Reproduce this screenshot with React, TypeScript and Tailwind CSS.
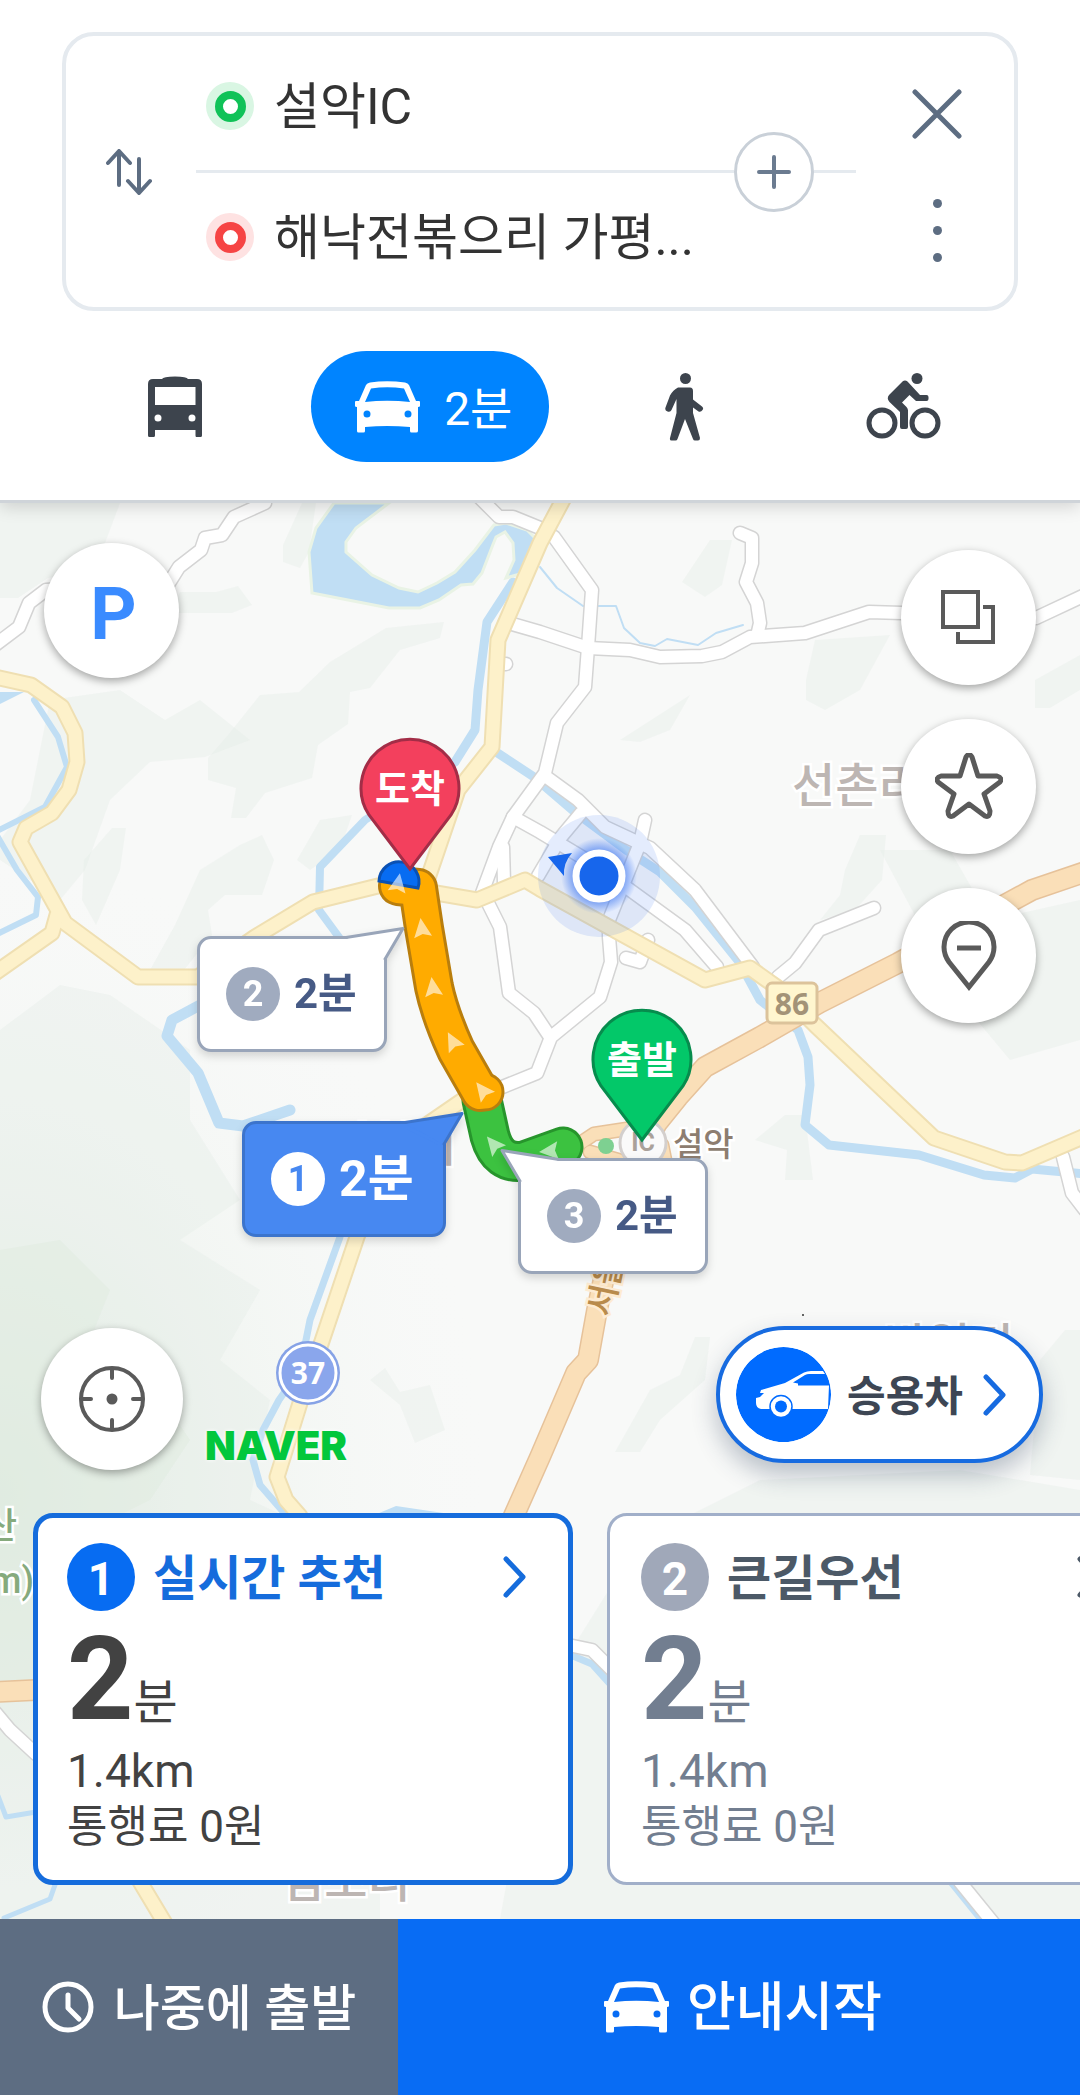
import { useState } from "react";
import type { ReactNode } from "react";

const MAP_TOP = 503;

const minorRoads = [
  "M265 503L234 517L222 535L205 538L201 550L179 567L169 583L46 590L29 603L19 627L-5 645",
  "M480 498L499 517L513 517L540 528L554 537L592 590L588 647L585 687L557 723L545 773L513 817L499 847L482 893",
  "M505 622L540 632L588 648L630 650L660 657L702 656L722 652L750 637L805 633L869 612L902 613L1036 618L1085 595",
  "M740 533L752 538L752 563L746 582L757 603L760 623L757 636",
  "M545 776L578 800L605 827L650 848L695 890L753 967",
  "M645 820L640 843L609 920L609 937L611 962L600 997L551 1037L537 1073L490 1092",
  "M513 817L540 832L600 868L630 890L685 930L717 967",
  "M581 813L561 837L538 876",
  "M503 847L504 883",
  "M486 899L500 927L509 993L534 1013L550 1037",
  "M778 977L795 963L819 930L874 908",
  "M1063 1157L1072 1193L1085 1210",
  "M648 940L640 962L626 958",
  "M500 664L506 664",
  "M573 1646L592 1650L612 1670",
  "M960 1882L995 1925",
  "M-5 1712L10 1730L36 1754",
];

const yellowRoads = [
  "M564 498L540 543L498 640L492 747L458 790L424 890",
  "M-5 677L31 685L62 707L75 733L77 762L69 790L52 813L26 828L20 842L65 923L138 977L198 977L255 937L313 902L382 885L436 893L477 900L525 880L540 889L705 980L750 968L778 988L815 1025L934 1138L1005 1162L1022 1163L1085 1136",
  "M-5 973L52 933L57 915",
  "M470 1095L390 1150L357 1237L320 1347L300 1403L277 1477L286 1500L300 1516",
  "M136 1875L166 1925",
];

const orangeRoads = [
  "M1085 872L1032 890L898 963L819 1003L760 1037L705 1067L678 1097L657 1123L625 1180L597 1310L588 1360L576 1373L540 1457L512 1520",
  "M-5 1692L36 1690",
];

const streams = [
  { d: "M513 582L487 622L478 690L475 730L455 762", width: 9 },
  { d: "M455 762L365 820L320 867L319 910L341 940", width: 8 },
  { d: "M490 748L534 777L576 813L626 850L660 872L695 907L740 963L760 1000L798 1030L808 1057L810 1085L805 1125L829 1145L919 1155L984 1175L1015 1178L1032 1169L1085 1174", width: 9 },
  { d: "M540 567L557 588L583 606L616 606L624 628L640 643L655 646L667 639L698 645L716 633L743 625", width: 2 },
  { d: "M34 700L58 737L67 767L45 807L-5 832L17 870L38 897L36 915L-5 935", width: 6 },
  { d: "M200 1005L172 1020L167 1036L198 1073L219 1123L243 1126L290 1110", width: 11 },
  { d: "M340 1237L310 1320L300 1370L279 1400L263 1430L253 1460L260 1485L286 1515", width: 7 },
  { d: "M573 1656L592 1664L610 1684", width: 7 },
  { d: "M948 1880L982 1922", width: 5 },
  { d: "M-2 1796L6 1817L36 1812M56 1882L50 1899L4 1918", width: 5 },
];

const hills = [
  "M0 503H120L95 570L48 578L18 598H0Z",
  "M180 592H216L238 586L252 605L232 613H170Z",
  "M302 503H316L309 552L300 568L283 562V545Z",
  "M260 695L299 692L330 662L386 628L444 622L440 638L400 650L370 688L350 692L348 724L318 745L312 778L265 793L246 818H231L236 788L208 780V758L228 735Z",
  "M0 840L30 800L50 700L120 690L165 720L200 700L250 740L205 757L150 762L110 800L85 870L60 900L0 860Z",
  "M84 860L112 828H126L120 870L96 925L82 900Z",
  "M150 970L175 925L200 870L240 845L262 835L274 860L262 895H225L208 910L212 935L180 975Z",
  "M297 860L320 820L352 815L340 850L310 870Z",
  "M0 1030L60 985L110 995L190 1050V1120L240 1200L180 1240L260 1290L220 1360L270 1400L250 1500L380 1560V1919H0Z",
  "M682 582L710 540H732L722 585L705 597Z",
  "M815 640L890 635L860 690L825 710L806 700V680Z",
  "M1035 680L1080 655V690L1050 708H1035Z",
  "M620 740L690 695L670 730L640 742Z",
  "M845 870L860 835H886L882 880L855 910L820 920L840 895Z",
  "M755 1140L785 1115H805L813 1180H785L787 1150Z",
  "M615 1452L650 1390L680 1375L695 1337H710L705 1380L660 1420L640 1452Z",
  "M880 850H950L990 920L1080 900V1040L1010 1060L960 1000Z",
  "M1040 1360L1065 1330H1080V1480L1030 1475Z",
  "M370 1380L385 1368L400 1392L430 1385L445 1430L415 1443L400 1405Z",
  "M500 1919L540 1700L640 1540L760 1480L960 1470L1080 1490V1919Z",
];

const routeMarks = [
  { x: 422, y: 929, turn: -8 },
  { x: 433, y: 988, turn: -8 },
  { x: 453, y: 1042, turn: -28 },
  { x: 483, y: 1091, turn: -38 },
  { x: 494, y: 1145, turn: -40 },
  { x: 550, y: 1151, turn: -95 },
  { x: 398, y: 884, turn: 10 },
];

const callouts = [
  { id: 2, time: "2분", x: 197, y: 936, tail: "right", active: false },
  { id: 1, time: "2분", x: 242, y: 1121, tail: "right", active: true },
  { id: 3, time: "2분", x: 518, y: 1158, tail: "left", active: false },
];

const routes = [
  { id: 1, name: "실시간 추천", minutes: 2, distance: "1.4km", toll: "통행료 0원" },
  { id: 2, name: "큰길우선", minutes: 2, distance: "1.4km", toll: "통행료 0원" },
];

function CarIcon() {
  return (
    <svg width="65" height="52" viewBox="0 0 65 52" fill="currentColor" aria-hidden="true">
      <path
        fillRule="evenodd"
        d="M4 20L11 4Q12 2 15 1.500Q32 -1 50 1.500Q53 2 54 4L61 20H64Q65 20 65 21V25Q65 26 63 26V50Q63 51.500 61 51.500H56.500Q55 51.500 55 50V46Q32 44 10 46V50Q10 51.500 8.500 51.500H3.500Q2 51.500 2 50V26Q0 26 0 25V21Q0 20 1 20ZM10 21Q32 18.500 55 21L49 7.500Q32 5 16 7.500ZM12 29.500A3.500 3.500 0 1 0 12 36.500A3.500 3.500 0 1 0 12 29.500ZM53 29.500A3.500 3.500 0 1 0 53 36.500A3.500 3.500 0 1 0 53 29.500Z"
      />
    </svg>
  );
}

function BusIcon() {
  return (
    <svg width="55" height="62" viewBox="0 0 55 62" fill="currentColor" aria-hidden="true">
      <path
        fillRule="evenodd"
        d="M5 3H14Q15 0.500 27 0.500Q39 0.500 40 3H49Q54 3 54 8V59.500Q54 61 52.500 61H48.500Q47.500 61 47.500 59.500V54H7V59.500Q7 61 5.500 61H1.500Q0 61 0 59.500V8Q0 3 5 3ZM7 11V29H47.500V11ZM10 38.500A3.500 3.500 0 1 0 10 45.500A3.500 3.500 0 1 0 10 38.500ZM44 38.500A3.500 3.500 0 1 0 44 45.500A3.500 3.500 0 1 0 44 38.500Z"
      />
    </svg>
  );
}

function WalkIcon() {
  return (
    <svg width="39" height="68" viewBox="0 0 39 68" fill="currentColor" aria-hidden="true">
      <circle cx="20.500" cy="5.500" r="5.500" />
      <path d="M13 14.500H25Q28 14.500 28 18V26.500L37 33.500Q39 35 37.500 37Q36 39.500 33.500 38.500L28 34.500V40L35 65Q35 67.500 33 67.500H30Q28.500 67.500 28 66L20 46L12.500 66Q12 67.500 10.500 67.500H6.500Q4.500 67.500 5 65L11.500 40V26L6.500 37Q5.500 39.500 2.500 38.500Q-0.500 37.500 0.500 34.500L5 22.500Q8 17 13 14.500Z" />
    </svg>
  );
}

function BikeIcon() {
  return (
    <svg width="75" height="68" viewBox="0 0 75 68" fill="currentColor" aria-hidden="true">
      <circle cx="16" cy="50" r="13" fill="none" stroke="currentColor" strokeWidth="5" />
      <circle cx="59" cy="50" r="13" fill="none" stroke="currentColor" strokeWidth="5" />
      <circle cx="51" cy="5.500" r="5.500" />
      <path d="M36.500 8.500Q39 6.500 41.500 8.500L54 22H60.500Q62.500 22 62.500 24V26Q62.500 28 60.500 28H50L43.500 22L36 29.500L40.500 34Q42 35.500 42 37.500V54Q42 56 40 56H36Q34 56 34 54V39L23.500 29Q20 25 23.500 21.500Z" />
    </svg>
  );
}

function SedanIcon() {
  return (
    <svg width="95" height="95" viewBox="0 0 95 95" className="shrink-0 rounded-full" aria-hidden="true">
      <circle cx="47.500" cy="47.500" r="47.500" fill="#006bff" />
      <path d="M25 43L49 36L68 25.500Q71 24 75 24H87L89 27H73Q71 27 69 28L57 35.500L62 36.500V38.500H93L92 62H25Q20 61 20 56V51L24 50L28 46H24Z" fill="#fff" />
      <circle cx="45" cy="59.500" r="11" fill="#fff" stroke="#006bff" strokeWidth="1.500" />
      <circle cx="45" cy="59.500" r="6" fill="#006bff" />
    </svg>
  );
}

function Chevron() {
  return (
    <svg width="26" height="42" viewBox="0 0 26 42" fill="none" stroke="currentColor" strokeWidth="5" strokeLinecap="round" strokeLinejoin="round" aria-hidden="true">
      <path d="M3 3L20 21L3 39" />
    </svg>
  );
}

function Pin({ x, y, label, fill, stroke }: { x: number; y: number; label: string; fill: string; stroke: string }) {
  return (
    <g transform={`translate(${x} ${y})`}>
      <path d="M0 0L-41 -54A49 49 0 1 1 41 -54Z" fill={fill} stroke={stroke} strokeWidth="3" />
      <text y="-67" textAnchor="middle" fontSize="38" fontWeight="700" fill="#fff">{label}</text>
    </g>
  );
}

function MapDrawing() {
  return (
    <svg width="1080" height="1416" viewBox="0 503 1080 1416" role="img" aria-label="지도">
      <defs>
        <radialGradient id="forest" cx="0" cy="0.700" r="0.450">
          <stop offset="0" stopColor="#e0ece0" />
          <stop offset="1" stopColor="#f6f8f7" stopOpacity="0" />
        </radialGradient>
        <radialGradient id="dotGlow">
          <stop offset="0.650" stopColor="#2f6df0" stopOpacity="0.600" />
          <stop offset="1" stopColor="#2f6df0" stopOpacity="0" />
        </radialGradient>
      </defs>
      <rect y="503" width="1080" height="1416" fill="#f8f9f8" />
      <rect y="503" width="1080" height="1416" fill="url(#forest)" />
      {hills.map((d) => (
        <path key={d} d={d} fill="#e2ece5" opacity="0.350" />
      ))}
      <path d="M0 1250L60 1240L110 1290L90 1340L150 1380L190 1440L150 1500L90 1530V1700H0Z" fill="#e0ebe0" opacity="0.500" />

      <g fill="none" strokeLinejoin="round" strokeLinecap="round">
        {streams.map((s) => (
          <path key={s.d} d={s.d} stroke="#c0def4" strokeWidth={s.width} />
        ))}
      </g>
      <path
        d="M334 503L316 528L309 552L312 593L389 608H420L439 600L461 585L473 584L482 573L492 547L496 537L505 532L513 543L514 560L506 578L520 574L535 538L527 530L506 523L494 525L475 550L455 572L437 583L418 592L399 588L372 575L346 552V542L356 528L389 503Z"
        fill="#c0def4"
        stroke="#e9f3e5"
        strokeWidth="3"
      />
      <path d="M372 1516L396 1506L450 1514ZM0 692H24L0 704Z" fill="#c0def4" />

      <g fill="none" strokeLinejoin="round" strokeLinecap="round">
        {minorRoads.map((d) => (
          <path key={d} d={d} stroke="#d4d4d4" strokeWidth="15" />
        ))}
        {minorRoads.map((d) => (
          <path key={d} d={d} stroke="#fff" strokeWidth="12" />
        ))}
        {yellowRoads.map((d) => (
          <path key={d} d={d} stroke="#efdfb2" strokeWidth="17" />
        ))}
        {yellowRoads.map((d) => (
          <path key={d} d={d} stroke="#fdf1ca" strokeWidth="13" />
        ))}
        {orangeRoads.map((d) => (
          <path key={d} d={d} stroke="#e6c29a" strokeWidth="22" />
        ))}
        {orangeRoads.map((d) => (
          <path key={d} d={d} stroke="#fadfb8" strokeWidth="19" />
        ))}
        <path d="M570 1150L594 1134L640 1127M640 1140L662 1145L666 1165M590 1152L618 1160" stroke="#e6c29a" strokeWidth="15" />
        <path d="M570 1150L594 1134L640 1127M640 1140L662 1145L666 1165M590 1152L618 1160" stroke="#fadfb8" strokeWidth="12" />
      </g>

      <g fontWeight="500" fill="#bdb6b3" stroke="#fff" strokeWidth="5" paintOrder="stroke" fontSize="47">
        <text x="792" y="802">선촌리</text>
        <text x="327" y="1161">신천리</text>
        <text x="884" y="1362">방일리</text>
        <text x="281" y="1897">엄소리</text>
        <g fill="#86aa7d" fontSize="36">
          <text x="17" y="1539" textAnchor="end">산</text>
          <text x="34" y="1593" textAnchor="end">m)</text>
        </g>
        <text x="673" y="1156" fontSize="33" fill="#8d7d70">설악</text>
        <text transform="translate(611 1318) rotate(-78)" fontSize="34" fill="#b98b4c" stroke="#fdebd2">서울</text>
      </g>
      <circle cx="803" cy="1315" r="1" fill="#333" />

      <rect x="767" y="983" width="50" height="40" rx="5" fill="#fff6cf" stroke="#dcc39b" strokeWidth="3" />
      <circle cx="308" cy="1373" r="32" fill="#86a2e6" />
      <circle cx="308" cy="1373" r="28" fill="#8aa6ec" stroke="#fff" strokeWidth="3" />
      <g fontWeight="700" textAnchor="middle" className="font-['Noto_Sans']">
        <text x="792" y="1015" fontSize="30" fill="#a39377">86</text>
        <text x="308" y="1384" fontSize="30" fill="#fff">37</text>
      </g>
      <circle cx="643" cy="1143" r="23" fill="#fafafa" stroke="#d3cfcd" strokeWidth="3" />
      <text x="643" y="1151" textAnchor="middle" fontSize="25" fontWeight="700" fill="#aaa19a">IC</text>
      <circle cx="606" cy="1146" r="8" fill="#7ed091" />

      {/* current position */}
      <circle cx="599" cy="876" r="61" fill="#2f6df0" opacity="0.130" />
      <circle cx="599" cy="876" r="38" fill="url(#dotGlow)" />
      <circle cx="599" cy="876" r="23" fill="#1766ec" stroke="#fff" strokeWidth="7" />
      <path d="M548 857L572 853Q563 863 564 876Z" fill="#1766ec" />

      {/* route, green part first so that the slow part lies on top */}
      <g fill="none" strokeLinecap="round" strokeLinejoin="round">
        <path d="M482 1100L490 1136Q498 1165 524 1161L563 1147" stroke="#27952c" strokeWidth="41" />
        <path d="M482 1100L490 1136Q498 1165 524 1161L563 1147" stroke="#3cc240" strokeWidth="35" />
        <path d="M398 886L418 888L424 928L434 987Q440 1015 456 1050L480 1092" stroke="#b97e0d" strokeWidth="40" />
        <circle cx="485" cy="1092" r="18" fill="#ffab00" stroke="#b97e0d" strokeWidth="3" />
        <path d="M398 886L418 888L424 928L434 987Q440 1015 456 1050L480 1092" stroke="#ffab00" strokeWidth="34" />
      </g>
      <path d="M379 881A20 20 0 1 1 418 888Z" fill="#076cf2" stroke="#0a51b4" strokeWidth="3" />
      {routeMarks.map((m) => (
        <path key={m.y} transform={`translate(${m.x} ${m.y}) rotate(${m.turn})`} d="M0 -11L9 8L0 5L-9 8Z" fill="#fff" opacity="0.600" />
      ))}

      <Pin x={410} y={869} label="도착" fill="#f3405d" stroke="#a32d47" />
      <Pin x={642} y={1140} label="출발" fill="#03c869" stroke="#078c4d" />
    </svg>
  );
}

function Callout({ callout }: { callout: (typeof callouts)[number] }) {
  const { id, time, x, y, tail, active } = callout;
  return (
    <button
      style={{ left: x, top: y - MAP_TOP }}
      className={`absolute flex h-[116px] items-center gap-[14px] rounded-[14px] border-[3px] pl-[26px] font-bold drop-shadow-lg ${
        active ? "w-[204px] border-[#3c74cc] bg-[#4788f1] text-[50px] text-white" : "w-[190px] border-[#99a5b9] bg-white text-[42px] text-[#465a85]"
      }`}
    >
      <svg
        width="60"
        height="36"
        viewBox="0 0 60 36"
        className={`absolute -top-3 ${tail === "right" ? "-right-[21px]" : "-left-[21px] -scale-x-100"}`}
        fill={active ? "#4788f1" : "#fff"}
        stroke={active ? "#3c74cc" : "#99a5b9"}
        strokeWidth="3"
        strokeLinejoin="round"
        aria-hidden="true"
      >
        <path d="M1 12V16L36 34L39.500 32Z" stroke="none" />
        <path d="M1 10.500L58 1.500L39.500 33" />
      </svg>
      <span
        className={`flex size-[54px] items-center justify-center rounded-full text-4xl ${
          active ? "bg-white text-[#4788f1]" : "bg-[#a0abbf] text-white"
        }`}
      >
        {id}
      </span>
      <span className="leading-none">{time}</span>
    </button>
  );
}

function RoundButton({ label, children }: { label: string; children: ReactNode }) {
  return (
    <button aria-label={label} className="flex size-[135px] items-center justify-center rounded-full bg-white text-[#5a5a5a] shadow-[0_3px_8px_rgba(0,0,0,0.35)]">
      {children}
    </button>
  );
}

function Waypoint({ name, ring, halo }: { name: string; ring: string; halo: string }) {
  return (
    <button className="flex h-32 items-center gap-5 pl-[10px] text-left text-[50px] text-[#333]">
      <span className={`flex size-12 shrink-0 items-center justify-center rounded-full ${halo}`}>
        <span className={`size-[31px] rounded-full border-8 bg-white ${ring}`} />
      </span>
      <span className="truncate pt-[2px] leading-[70px]">{name}</span>
    </button>
  );
}

export default function App() {
  const [selected, setSelected] = useState(1);

  return (
    <div className="flex min-h-screen flex-col overflow-hidden bg-white font-[Roboto,'Noto_Sans_CJK_KR',sans-serif]">
      <header className="relative z-10 border-b-[3px] border-[#cfd4d9] bg-white pt-8 pb-[38px] shadow-[0_4px_16px_rgba(0,0,0,0.15)]">
        <div className="mx-[62px] flex h-[279px] items-stretch rounded-[32px] border-4 border-[#e5eaef]">
          <button aria-label="출발 도착 바꾸기" className="flex w-[130px] items-center justify-center pr-1 text-[#5d6d82]">
            <svg width="46" height="46" viewBox="0 0 46 46" fill="none" stroke="currentColor" strokeWidth="4" strokeLinecap="round" strokeLinejoin="round" aria-hidden="true">
              <path d="M13 36V3M2 14L13 2L24 14" />
              <path d="M33 10V43M22 32L33 44L44 32" />
            </svg>
          </button>
          <div className="flex min-w-0 flex-1 flex-col justify-center">
            <Waypoint name="설악IC" ring="border-[#10c258]" halo="bg-[#d9f6e3]" />
            <div className="flex h-[3px] items-center">
              <span className="h-[3px] flex-1 bg-[#e5eaef]" />
              <button aria-label="경유지 추가" className="flex size-20 items-center justify-center rounded-full border-[3px] border-[#c9d0d8] bg-white text-[#6b7b90]">
                <svg width="34" height="34" viewBox="0 0 34 34" stroke="currentColor" strokeWidth="4" strokeLinecap="round" aria-hidden="true">
                  <path d="M17 2V32M2 17H32" />
                </svg>
              </button>
              <span className="h-[3px] w-[42px] bg-[#e5eaef]" />
            </div>
            <Waypoint name="해낙전볶으리 가평..." ring="border-[#f64444]" halo="bg-[#fee2e2]" />
          </div>
          <div className="flex w-[158px] flex-col items-center justify-center gap-[60px] pt-2 pl-1 text-[#5d6d82]">
            <button aria-label="닫기">
              <svg width="50" height="50" viewBox="0 0 50 50" stroke="currentColor" strokeWidth="5" strokeLinecap="round" aria-hidden="true">
                <path d="M3 3L47 47M47 3L3 47" />
              </svg>
            </button>
            <button aria-label="더보기" className="flex w-12 flex-col items-center gap-[18px]">
              <span className="size-[9px] rounded-full bg-current" />
              <span className="size-[9px] rounded-full bg-current" />
              <span className="size-[9px] rounded-full bg-current" />
            </button>
          </div>
        </div>

        <nav className="mt-10 grid grid-cols-[254fr_254fr_254fr_184fr] place-items-center pr-[84px] pl-12 text-[#3d444d]">
          <button aria-label="대중교통"><BusIcon /></button>
          <button className="flex h-[111px] w-[238px] items-center justify-center gap-6 rounded-full bg-[#0084ff] pl-2 text-[46px] leading-none text-white">
            <CarIcon />
            <span className="pt-1">2분</span>
          </button>
          <button aria-label="도보"><WalkIcon /></button>
          <button aria-label="자전거"><BikeIcon /></button>
        </nav>
      </header>

      <main className="relative flex flex-1 flex-col justify-between overflow-hidden bg-[#f8f9f8]">
        <div className="absolute top-0 left-1/2 h-[1416px] w-[1080px] -translate-x-1/2">
          <MapDrawing />
          {callouts.map((callout) => (
            <Callout key={callout.id} callout={callout} />
          ))}
        </div>

        <div className="relative flex items-start justify-between pt-10 pr-11 pl-11">
          <RoundButton label="주차장">
            <span className="pt-2 pl-1 text-7xl leading-none font-bold text-[#3a8bff]">P</span>
          </RoundButton>
          <div className="flex flex-col gap-[34px] pt-[7px]">
            <RoundButton label="지도 종류">
              <svg width="56" height="56" viewBox="1 2 56 56" fill="none" stroke="currentColor" strokeWidth="4" aria-hidden="true">
                <path d="M3 4H38V39H3ZM43 19H53V54H18V44" />
              </svg>
            </RoundButton>
            <RoundButton label="즐겨찾기">
              <svg width="68" height="68" viewBox="0 2 68 68" fill="none" stroke="currentColor" strokeWidth="5" strokeLinejoin="round" aria-hidden="true">
                <path d="M31 6Q34 1 37 6L43 25H62Q68 27 65 31L49 43L55 60Q55 67 50 65L34 53L18 65Q13 67 13 60L19 43L3 31Q0 27 6 25H25Z" />
              </svg>
            </RoundButton>
            <RoundButton label="장소 숨기기">
              <svg width="56" height="70" viewBox="0 1 56 70" fill="none" stroke="currentColor" strokeWidth="5" aria-hidden="true">
                <path d="M28 67L8 42Q3 35 3 27A25 25 0 0 1 53 27Q53 35 48 42ZM16 28H40" />
              </svg>
            </RoundButton>
          </div>
        </div>

        <div className="relative">
          <div className="flex items-start justify-between pr-[37px] pl-[41px]">
            <div className="flex items-center gap-[22px] pt-[2px]">
              <button aria-label="현재 위치" className="flex size-[142px] items-center justify-center rounded-full bg-white text-[#5a5a5a] shadow-[0_3px_8px_rgba(0,0,0,0.35)]">
                <svg width="68" height="68" viewBox="0 0 68 68" fill="none" stroke="currentColor" strokeWidth="4" strokeLinecap="round" aria-hidden="true">
                  <circle cx="34" cy="34" r="31" />
                  <circle cx="34" cy="34" r="5.500" fill="currentColor" stroke="none" />
                  <path d="M34 4V13M34 55V64M4 34H13M55 34H64" />
                </svg>
              </button>
              <span className="pt-[94px] font-[Inter,sans-serif] text-[40px] leading-none font-black text-[#03c73c] [text-shadow:0_0_4px_#fff]">NAVER</span>
            </div>
            <button className="flex h-[137px] w-[327px] items-center rounded-full border-4 border-[#176be0] bg-white pl-4 text-[42px] font-bold text-[#3d4654] shadow-[0_12px_24px_rgba(40,60,90,0.3)]">
              <SedanIcon />
              <span className="mr-5 ml-4 pt-1 leading-none">승용차</span>
              <span className="text-[#176be0]"><Chevron /></span>
            </button>
          </div>

          <div className="mt-[43px] mb-[34px] flex gap-[34px] overflow-hidden pl-[33px]">
            {routes.map((route) => {
              const active = route.id === selected;
              return (
                <button
                  key={route.id}
                  onClick={() => setSelected(route.id)}
                  className={`flex h-[372px] w-[540px] shrink-0 flex-col rounded-[20px] bg-white text-left ${
                    active ? "border-[5px] border-[#156cdc] px-[29px] pt-[25px] text-[#424242]" : "border-[3px] border-[#a1afc9] px-[31px] pt-[27px] text-[#727e90]"
                  }`}
                >
                  <span className={`flex w-full items-center gap-[18px] text-5xl leading-[68px] font-bold ${active ? "text-[#156cdc]" : "text-[#4c5967]"}`}>
                    <span className={`flex size-[68px] items-center justify-center rounded-full pt-1 text-[46px] text-white ${active ? "bg-[#076cf2]" : "bg-[#a0a8b9]"}`}>
                      {route.id}
                    </span>
                    <span className="h-[68px] flex-1 pt-[2px]">{route.name}</span>
                    <span className="mr-[10px]"><Chevron /></span>
                  </span>
                  <span className="mt-[10px] flex h-[116px] shrink-0 items-baseline text-5xl leading-[116px]">
                    <strong className="text-[116px]">{route.minutes}</strong>분
                  </span>
                  <span className="mt-[6px] text-[46px] leading-[56px]">{route.distance}</span>
                  <span className="text-[44px] leading-[56px]">{route.toll}</span>
                </button>
              );
            })}
          </div>
        </div>
      </main>

      <footer className="flex h-44 text-white">
        <button className="flex w-[398px] items-center justify-center gap-5 bg-[#5d6d82] text-[50px] font-medium">
          <svg width="52" height="52" viewBox="0 0 52 52" fill="none" stroke="currentColor" strokeWidth="5" strokeLinecap="round" strokeLinejoin="round" aria-hidden="true">
            <circle cx="26" cy="26" r="23" />
            <path d="M26 14V27L37 38" />
          </svg>
          <span className="pt-1">나중에 출발</span>
        </button>
        <button className="flex flex-1 items-center justify-center gap-[18px] bg-[#086cf4] pl-2 text-[53px] font-medium">
          <CarIcon />
          <span className="pt-1">안내시작</span>
        </button>
      </footer>
    </div>
  );
}
